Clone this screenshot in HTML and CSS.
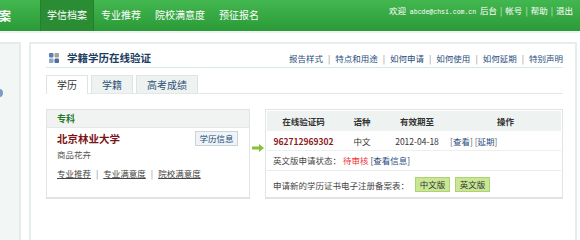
FILE: index.html
```html
<!DOCTYPE html>
<html lang="zh-CN">
<head>
    <meta charset="UTF-8">
    <title>学籍学历在线验证</title>
    <link rel="stylesheet" href="styles.css">
</head>
<body>
    <div class="topbar">
        <div class="logo">案</div>
        <ul class="nav">
            <li class="active">学信档案</li>
            <li>专业推荐</li>
            <li>院校满意度</li>
            <li>预征报名</li>
        </ul>
        <div class="user">
            欢迎 <span class="mail">abcde@chsi.com.cn</span>
            <a href="#">后台</a><span class="bar">|</span><a href="#">帐号</a><span class="bar">|</span><a href="#">帮助</a><span class="bar">|</span><a href="#">退出</a>
        </div>
    </div>

    <div class="page">
        <div class="side"><span class="side-dot"></span></div>

        <div class="panel">
            <div class="panel-head">
                <h2 class="panel-title">
                    <svg class="title-icon" width="10" height="10" viewBox="0 0 10 10">
                        <rect x="0" y="0" width="4.5" height="4.5" rx="1" fill="#5a7fb0"/>
                        <rect x="5.5" y="0" width="4.5" height="4.5" rx="1" fill="#8aa6c8"/>
                        <rect x="0" y="5.5" width="4.5" height="4.5" rx="1" fill="#8aa6c8"/>
                        <rect x="5.5" y="5.5" width="4.5" height="4.5" rx="1" fill="#4a6e9e"/>
                        <circle cx="7.7" cy="2.3" r="1.2" fill="#e59a2e"/>
                    </svg>
                    学籍学历在线验证
                </h2>
                <div class="help-links">
                    <a href="#">报告样式</a><span class="sep">|</span><a href="#">特点和用途</a><span class="sep">|</span><a href="#">如何申请</a><span class="sep">|</span><a href="#">如何使用</a><span class="sep">|</span><a href="#">如何延期</a><span class="sep">|</span><a href="#">特别声明</a>
                </div>
            </div>

            <div class="tabs">
                <div class="tab tab-active">学历</div>
                <div class="tab">学籍</div>
                <div class="tab tab-wide">高考成绩</div>
            </div>

            <div class="cards">
                <div class="degree-card">
                    <div class="card-head">专科</div>
                    <div class="card-body">
                        <div class="school-row">
                            <span class="school">北京林业大学</span>
                            <span class="info-btn">学历信息</span>
                        </div>
                        <div class="major">商品花卉</div>
                        <div class="card-links">
                            <a href="#">专业推荐</a><span class="sep">|</span><a href="#">专业满意度</a><span class="sep">|</span><a href="#">院校满意度</a>
                        </div>
                    </div>
                </div>

                <div class="arrow">
                    <svg width="12" height="8" viewBox="0 0 12 8">
                        <path d="M0 2.5 H7 V0 L12 4 L7 8 V5.5 H0 Z" fill="#86c13a"/>
                    </svg>
                </div>

                <div class="verify-card">
                    <table class="verify-table">
                        <thead>
                            <tr>
                                <th class="c1">在线验证码</th>
                                <th class="c2">语种</th>
                                <th class="c3">有效期至</th>
                                <th class="c4">操作</th>
                            </tr>
                        </thead>
                        <tbody>
                            <tr>
                                <td class="code">962712969302</td>
                                <td>中文</td>
                                <td>2012-04-18</td>
                                <td class="ops">[<a href="#">查看</a>]&nbsp;[<a href="#">延期</a>]</td>
                            </tr>
                        </tbody>
                    </table>
                    <div class="eng-row">
                        英文版申请状态：<span class="pending">待审核</span>&nbsp;[<a href="#">查看信息</a>]
                    </div>
                    <div class="apply-row">
                        申请新的学历证书电子注册备案表：
                        <span class="green-btn">中文版</span>
                        <span class="green-btn">英文版</span>
                    </div>
                </div>
            </div>
        </div>
    </div>
</body>
</html>
```

FILE: styles.css
```css
body {
    margin: 0;
    width: 580px;
    height: 240px;
    overflow: hidden;
    background-color: #fff;
    color: #333;
    font-family: "Noto Sans CJK SC", "Noto Sans", sans-serif;
    font-size: 8.5px;
}

a {
    color: inherit;
    text-decoration: none;
}

/* Top bar */
.topbar {
    height: 31px;
    display: flex;
    align-items: stretch;
    background-image: linear-gradient(#43b74f, #2b9a38);
    border-bottom: 2px solid #eef4f2;
    color: #fff;
}

.logo {
    width: 41px;
    font-size: 12px;
    font-weight: bold;
    line-height: 31px;
    margin-left: -1px;
}

.nav {
    display: flex;
    margin: 0;
    padding: 0;
    list-style: none;
}

.nav li {
    padding: 0 7px;
    font-size: 10px;
    line-height: 30px;
}

.nav li.active {
    background-color: #2a8d33;
    border-left: 1px solid #23802c;
    border-right: 1px solid #23802c;
    padding: 0 6px;
}

.user {
    margin-left: auto;
    padding-right: 7px;
    padding-top: 4px;
    line-height: 12px;
    white-space: nowrap;
}

.user .mail {
    margin: 0 2px;
    font-family: "Liberation Mono", monospace;
    font-size: 6.5px;
}

.user .bar {
    margin: 0 3px;
    color: #d6efd8;
}

/* Page */
.page {
    display: flex;
    padding-top: 9px;
}

.side {
    width: 19px;
    height: 200px;
    background-color: #f2f7f5;
    border-top: 2px solid #e3ece9;
    border-right: 2px solid #e3ece9;
}

.side-dot {
    display: block;
    width: 7px;
    height: 8px;
    margin: 45px 0 0 -4px;
    border-radius: 50%;
    background-color: #7d9cc4;
}

.panel {
    margin-left: 8px;
    width: 517px;
    height: 200px;
    border: 2px solid #e6eeec;
    border-bottom: none;
    padding: 0 12px 0 15px;
}

.panel-head {
    height: 24px;
    padding-top: 4px;
    box-sizing: border-box;
    display: flex;
    align-items: center;
    border-bottom: 1px solid #d6eadb;
}

.panel-title {
    display: flex;
    align-items: center;
    margin: 0;
    padding-left: 3px;
    font-size: 10.5px;
    font-weight: bold;
    color: #1c3c62;
}

.title-icon {
    margin-right: 8px;
}

.help-links {
    margin-left: auto;
    color: #1f4c7c;
    white-space: nowrap;
}

.help-links .sep {
    margin: 0 5px;
    color: #888;
}

/* Tabs */
.tabs {
    display: flex;
    gap: 3px;
    margin-top: 7px;
    border-bottom: 1px solid #e3e9e8;
}

.tab {
    width: 40px;
    height: 17px;
    line-height: 17px;
    text-align: center;
    font-size: 10px;
    color: #2c4f74;
    background-color: #eef3f2;
    border: 1px solid #dde5e3;
    border-bottom: none;
}

.tab-active {
    color: #333;
    background-color: #fff;
    margin-bottom: -1px;
    height: 18px;
}

.tab-wide {
    width: 60px;
}

/* Cards */
.cards {
    display: flex;
    margin-top: 15px;
}

.degree-card {
    width: 204px;
    height: 90px;
    box-sizing: border-box;
    border: 1px solid #dfe5e3;
    border-bottom-width: 2px;
}

.card-head {
    height: 17px;
    line-height: 17px;
    padding-left: 10px;
    background-color: #f0f3f2;
    border-bottom: 1px solid #e4e9e7;
    font-size: 9px;
    font-weight: bold;
    color: #23782b;
}

.card-body {
    padding: 3px 11px 0 10px;
}

.school-row {
    display: flex;
    justify-content: space-between;
    align-items: center;
    height: 15px;
}

.school {
    font-size: 10.5px;
    font-weight: bold;
    color: #7b1416;
}

.info-btn {
    width: 43px;
    height: 15px;
    box-sizing: border-box;
    line-height: 13px;
    text-align: center;
    border: 1px solid #c9d3da;
    background-color: #f1f4f7;
    color: #204c7c;
    font-size: 8.5px;
}

.major {
    margin-top: 2px;
    line-height: 12px;
    color: #555;
}

.card-links {
    margin-top: 7px;
    line-height: 12px;
    color: #444;
}

.card-links a {
    text-decoration: underline;
}

.card-links .sep {
    margin: 0 5px;
    color: #888;
}

.arrow {
    width: 15px;
    padding: 33px 0 0 2px;
    box-sizing: border-box;
}

.verify-card {
    width: 298px;
    height: 90px;
    box-sizing: border-box;
    padding: 1px;
    border: 1px solid #dfe5e3;
    border-bottom-width: 2px;
}

.verify-table {
    width: 100%;
    border-collapse: collapse;
    table-layout: fixed;
}

.verify-table th {
    height: 20px;
    padding: 0;
    background-color: #eef3f2;
    font-weight: bold;
    color: #333;
    text-align: center;
}

.verify-table td {
    height: 19px;
    padding: 0;
    text-align: center;
    border-bottom: 1px solid #eceff0;
}

.verify-table .c1 { width: 73px; }
.verify-table .c2 { width: 44px; }
.verify-table .c3 { width: 66px; }

.verify-table .code {
    font-weight: bold;
    color: #8b1a1a;
}

.verify-table .ops {
    text-align: left;
    color: #666;
}

.ops a,
.eng-row a {
    color: #1f4c7c;
}

.eng-row {
    height: 19px;
    line-height: 19px;
    padding-left: 6px;
    border-bottom: 1px solid #e6ebea;
    color: #444;
}

.pending {
    margin-left: 2px;
    color: #f03434;
}

.apply-row {
    display: flex;
    align-items: center;
    height: 27px;
    padding-left: 6px;
    padding-bottom: 1px;
    color: #444;
}

.green-btn {
    width: 35px;
    height: 15px;
    box-sizing: border-box;
    line-height: 13px;
    margin-left: 5px;
    text-align: center;
    background-color: #c8e693;
    border: 1px solid #afd175;
    color: #333;
}

.apply-row .green-btn:first-of-type {
    margin-left: 6px;
}
```
